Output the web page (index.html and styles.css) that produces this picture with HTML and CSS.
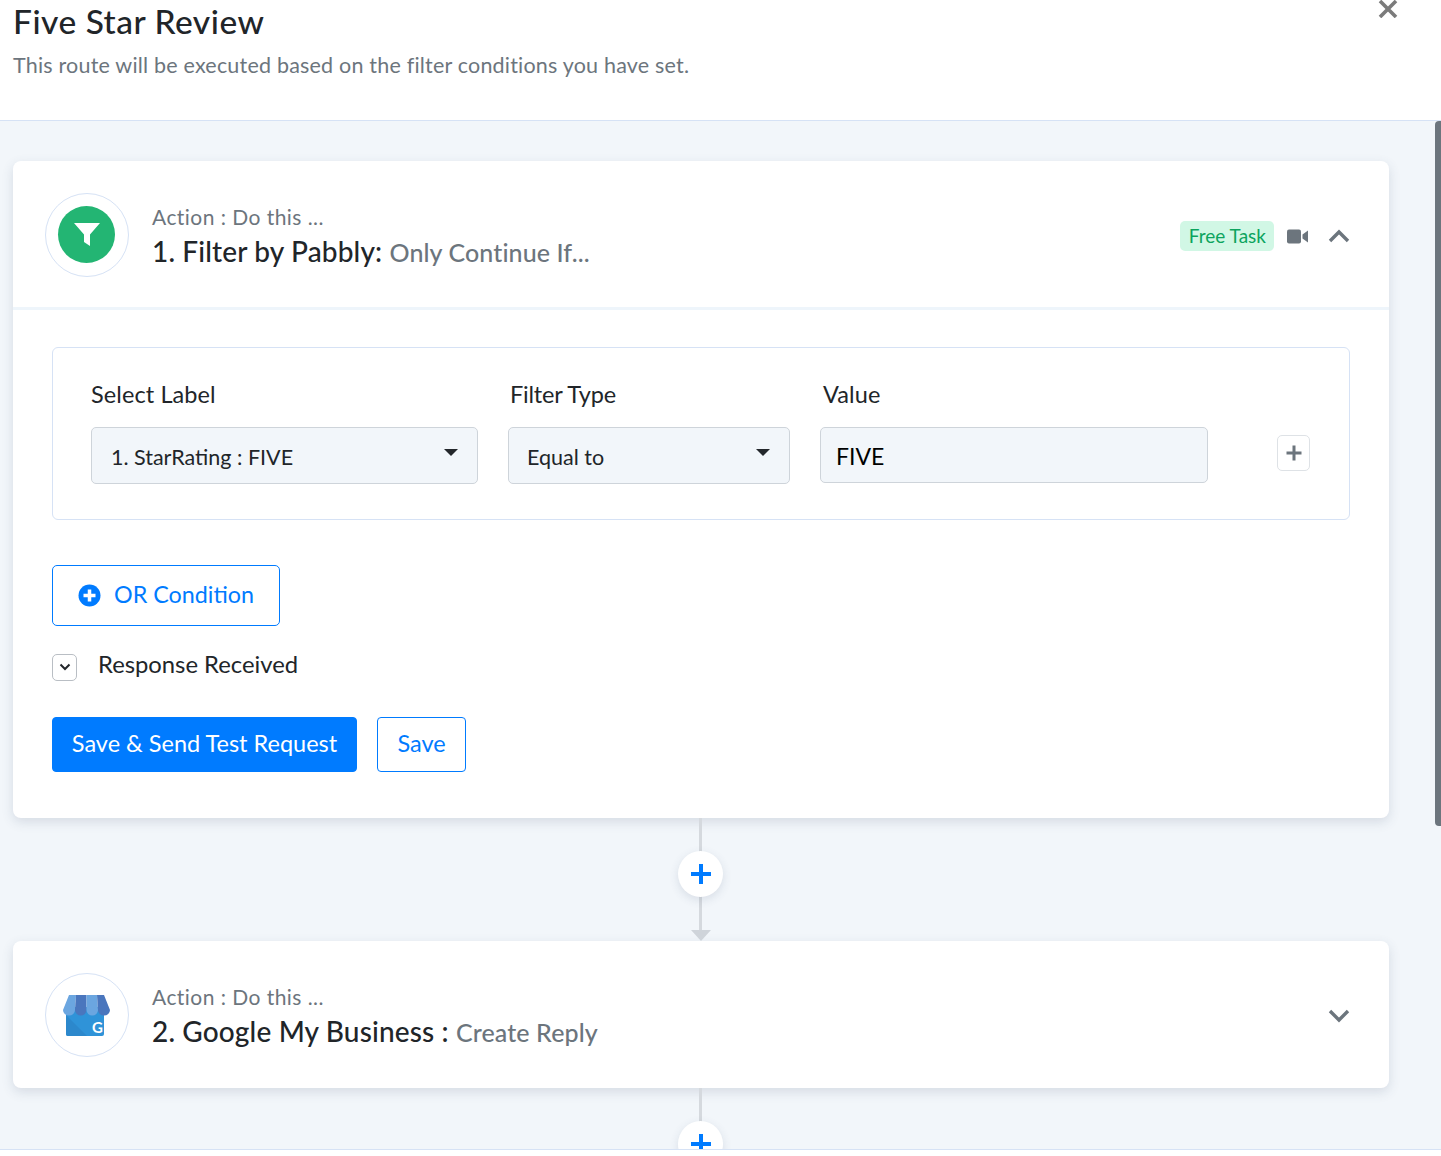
FILE: index.html
```html
<!DOCTYPE html>
<html lang="en">

<head>
    <meta charset="UTF-8">
    <title>Five Star Review</title>
    <link rel="stylesheet" href="styles.css">
</head>

<body>
    <div class="modal">
        <div class="modal-head">
            <h1>Five Star Review</h1>
            <p>This route will be executed based on the filter conditions you have set.</p>
            <svg class="close" width="20" height="18" viewBox="0 0 20 18">
                <path d="M2 1L18 17M18 1L2 17" stroke="#7b7b7b" stroke-width="3.6" fill="none" />
            </svg>
        </div>

        <div class="modal-body">
            <div class="scrollbar"></div>

            <div class="card">
                <div class="card-head">
                    <div class="app-icon">
                        <div class="filter-bg">
                            <svg width="28" height="28" viewBox="0 0 28 28">
                                <path d="M1 3H27L17 14.500V26L11 22V14.500Z" fill="#fff" />
                            </svg>
                        </div>
                    </div>
                    <div class="app-text">
                        <div class="action">Action : Do this ...</div>
                        <div class="step">1. Filter by Pabbly: <span>Only Continue If...</span></div>
                    </div>
                    <span class="free-task">Free Task</span>
                    <svg class="video" width="22" height="15" viewBox="0 0 22 15">
                        <rect x="0" y="0.500" width="14" height="14" rx="2" fill="#6c757d" />
                        <path d="M15.500 5.500L21 1.500V13.500L15.500 9.500Z" fill="#6c757d" />
                    </svg>
                    <svg class="chev" width="22" height="14" viewBox="0 0 22 14">
                        <path d="M2 12L11 3L20 12" stroke="#6c757d" stroke-width="3.400" fill="none" />
                    </svg>
                </div>

                <div class="card-body">
                    <div class="filter-box">
                        <div class="field field-label">
                            <label>Select Label</label>
                            <div class="select">1. StarRating : FIVE</div>
                        </div>
                        <div class="field field-type">
                            <label>Filter Type</label>
                            <div class="select">Equal to</div>
                        </div>
                        <div class="field field-value">
                            <label>Value</label>
                            <div class="input">FIVE</div>
                        </div>
                        <div class="add-rule">
                            <svg width="16" height="16" viewBox="0 0 16 16">
                                <path d="M8 0.500V15.500M0.500 8H15.500" stroke="#6c757d" stroke-width="3" fill="none" />
                            </svg>
                        </div>
                    </div>

                    <button class="btn-or">
                        <svg width="23" height="23" viewBox="0 0 23 23">
                            <circle cx="11.500" cy="11.500" r="11" fill="#007bff" />
                            <path d="M11.500 5.500V17.500M5.500 11.500H17.500" stroke="#fff" stroke-width="3.500" fill="none" />
                        </svg>
                        <span>OR Condition</span>
                    </button>

                    <div class="response">
                        <span class="toggle">
                            <svg width="12" height="8" viewBox="0 0 12 8">
                                <path d="M1.500 1.500L6 6L10.500 1.500" stroke="#23272b" stroke-width="2" fill="none" />
                            </svg>
                        </span>
                        <span class="response-text">Response Received</span>
                    </div>

                    <div class="actions">
                        <button class="btn btn-primary">Save &amp; Send Test Request</button>
                        <button class="btn btn-outline">Save</button>
                    </div>
                </div>
            </div>

            <div class="connector">
                <div class="add-step">
                    <svg width="20" height="20" viewBox="0 0 20 20">
                        <path d="M10 0V20M0 10H20" stroke="#007bff" stroke-width="4" fill="none" />
                    </svg>
                </div>
                <div class="arrow"></div>
            </div>

            <div class="card">
                <div class="card-head card-head-closed">
                    <div class="app-icon">
                        <svg class="gmb" width="47" height="41" viewBox="0 0 47 41">
                            <rect x="3" y="12" width="38" height="29" rx="2" fill="#2f93d8" />
                            <path d="M3 20L24 41H5a2 2 0 0 1-2-2Z" fill="#2c88cc" />
                            <path d="M6 0H13L12 15A6 5.500 0 0 1 0 15Z" fill="#6ba6e0" />
                            <path d="M13 0H23.500V15A5.750 5.500 0 0 1 12 15Z" fill="#4a76bd" />
                            <path d="M23.500 0H34L35 15A5.750 5.500 0 0 1 23.500 15Z" fill="#6ba6e0" />
                            <path d="M34 0H41L47 15A6 5.500 0 0 1 35 15Z" fill="#4a76bd" />
                            <text x="29" y="38" class="g-mark">G</text>
                        </svg>
                    </div>
                    <div class="app-text">
                        <div class="action">Action : Do this ...</div>
                        <div class="step">2. Google My Business : <span>Create Reply</span></div>
                    </div>
                    <svg class="chev" width="22" height="14" viewBox="0 0 22 14">
                        <path d="M2 2L11 11L20 2" stroke="#6c757d" stroke-width="3.400" fill="none" />
                    </svg>
                </div>
            </div>

            <div class="connector">
                <div class="add-step">
                    <svg width="20" height="20" viewBox="0 0 20 20">
                        <path d="M10 0V20M0 10H20" stroke="#007bff" stroke-width="4" fill="none" />
                    </svg>
                </div>
            </div>
        </div>
    </div>
</body>

</html>
```

FILE: styles.css
```css
* {
    margin: 0;
    padding: 0;
    box-sizing: border-box;
}

body {
    background: #fff;
    font-family: "Lato", "Open Sans", sans-serif;
    color: #212529;
}

.modal {
    height: 1150px;
    border-bottom: 1px solid #d6e2f5;
    overflow: hidden;
}

/* top bar */
.modal-head {
    height: 121px;
    padding-left: 13px;
    background: #fff;
    border-bottom: 1px solid #d6e2f5;
    position: relative;
}

.modal-head h1 {
    font-size: 33.500px;
    line-height: 42px;
    font-weight: 500;
    letter-spacing: 0.5px;
    color: #212529;
}

.modal-head p {
    margin-top: 8px;
    font-size: 21.500px;
    line-height: 31px;
    letter-spacing: 0.2px;
    color: #6c757d;
}

.close {
    position: absolute;
    top: 0;
    left: 1378px;
}

.modal-body {
    height: 1028px;
    padding: 40px 52px 0 13px;
    background: #f2f6fa;
    position: relative;
}

.scrollbar {
    position: absolute;
    top: 0;
    right: 0;
    width: 6px;
    height: 705px;
    background: #6c757d;
    border-radius: 4px 0 0 4px;
}

/* cards */
.card {
    background: #fff;
    border-radius: 8px;
    box-shadow: 0 4px 12px rgba(60, 80, 110, 0.16);
}

.card-head {
    height: 149px;
    padding: 2px 39px 0 32px;
    display: flex;
    align-items: center;
    border-bottom: 3px solid #eef5fb;
}

.card-head-closed {
    height: 147px;
    padding-top: 0;
    border-bottom: 0;
}

.app-icon {
    width: 84px;
    height: 84px;
    flex: none;
    border: 1px solid #d6e2f5;
    border-radius: 50%;
    display: flex;
    align-items: center;
    justify-content: center;
}

.filter-bg {
    width: 57px;
    height: 57px;
    margin: -2px 0 0 -1px;
    background: #23b573;
    border-radius: 50%;
    display: flex;
    align-items: center;
    justify-content: center;
}

.gmb {
    margin: 1px 0 0 -1px;
}

.g-mark {
    font-family: "Lato", sans-serif;
    font-size: 15px;
    font-weight: 700;
    fill: #fff;
}

.app-text {
    margin-left: 23px;
    flex: 1;
}

.card-head-closed .app-text {
    margin-top: 2px;
}

.card-head-closed .chev {
    margin-top: 2px;
}

.action {
    padding-top: 1px;
    font-size: 21px;
    line-height: 30px;
    letter-spacing: 0.45px;
    color: #6c757d;
}

.step {
    margin-top: 1px;
    font-size: 28px;
    line-height: 36px;
    font-weight: 500;
    letter-spacing: 0.15px;
    color: #212529;
}

.step span {
    font-size: 25px;
    letter-spacing: 0.1px;
    color: #6c757d;
}

.free-task {
    height: 30px;
    margin-top: 2px;
    padding: 0 8px 0 9px;
    background: #d1f7e5;
    border-radius: 5px;
    font-size: 19px;
    line-height: 30px;
    color: #0ca45e;
}

.video {
    margin: 2px 0 0 13px;
}

.chev {
    margin: 2px 0 0 19px;
}

.card-body {
    height: 508px;
    padding: 37px 39px 0;
}

/* filter row */
.filter-box {
    height: 173px;
    padding: 30px 38px 0;
    border: 1px solid #d6e2f5;
    border-radius: 6px;
    display: flex;
}

.field {
    flex: none;
}

.field label {
    display: block;
    margin-bottom: 17px;
    font-size: 23.500px;
    line-height: 32px;
    letter-spacing: 0.1px;
}

.field-label {
    width: 387px;
}

.field-type {
    width: 282px;
    margin-left: 30px;
}

.field-type label {
    padding-left: 2px;
    letter-spacing: -0.2px;
}

.field-value label {
    padding-left: 3px;
}

.field-value {
    width: 388px;
    margin-left: 30px;
}

.select,
.input {
    height: 57px;
    background: #f2f6fa;
    border: 1px solid #ced4da;
    border-radius: 5px;
    font-size: 21.500px;
    line-height: 58px;
    padding-left: 19px;
    position: relative;
}

.field-type .select {
    padding-left: 18px;
}

.input {
    height: 56px;
    font-size: 23px;
    line-height: 56px;
    padding-left: 15px;
    color: #000;
}

.select::after {
    content: "";
    position: absolute;
    top: 21px;
    right: 19px;
    border: 7px solid transparent;
    border-top: 7px solid #23272b;
    border-bottom: 0;
}

.add-rule {
    flex: none;
    width: 33px;
    height: 36px;
    margin: 57px 0 0 69px;
    border: 1px solid #dee2e6;
    border-radius: 5px;
    display: flex;
    align-items: center;
    justify-content: center;
}

/* buttons */
button {
    font-family: inherit;
    background: #fff;
}

.btn-or {
    width: 228px;
    height: 61px;
    margin-top: 45px;
    padding-left: 25px;
    border: 1px solid #007bff;
    border-radius: 5px;
    display: flex;
    align-items: center;
    gap: 13px;
    font-size: 23.300px;
    color: #007bff;
}

.btn-or span {
    padding-bottom: 3px;
}

.response {
    margin-top: 27px;
    height: 28px;
    display: flex;
    align-items: center;
    font-size: 23.800px;
    color: #212529;
}

.response-text {
    padding-bottom: 7px;
}

.toggle {
    width: 25px;
    height: 27px;
    margin-right: 21px;
    border: 1px solid #b9bec4;
    border-radius: 5px;
    display: flex;
    align-items: center;
    justify-content: center;
}

.actions {
    margin-top: 36px;
    display: flex;
    gap: 20px;
}

.btn {
    height: 55px;
    padding-bottom: 4px;
    border-radius: 4px;
    border: 1px solid #007bff;
    font-size: 23.500px;
}

.btn-primary {
    width: 305px;
    background: #007bff;
    color: #fff;
}

.btn-outline {
    width: 89px;
    color: #007bff;
}

/* line between two cards */
.connector {
    height: 123px;
    padding-top: 33px;
    display: flex;
    justify-content: center;
    background: linear-gradient(#d5d9de, #d5d9de) 686px 0 / 3px 112px no-repeat;
    position: relative;
}

.add-step {
    width: 45px;
    height: 46px;
    margin-right: 1px;
    background: #fff;
    border-radius: 50%;
    box-shadow: 0 3px 10px rgba(60, 80, 110, 0.14);
    display: flex;
    align-items: center;
    justify-content: center;
}

.arrow {
    position: absolute;
    bottom: 0;
    left: 678px;
    border: 10px solid transparent;
    border-top: 11px solid #cfd4da;
    border-bottom: 0;
}
```
